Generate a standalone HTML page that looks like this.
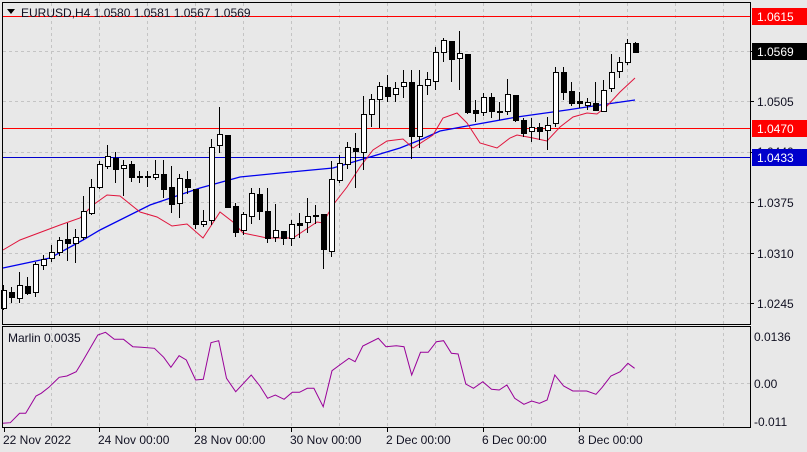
<!DOCTYPE html>
<html><head><meta charset="utf-8"><style>
html,body{margin:0;padding:0;background:#e8e8e8;width:807px;height:452px;overflow:hidden}
svg{display:block}
text{font-family:"Liberation Sans",sans-serif;font-size:12px;fill:#111122}
</style></head><body>
<svg id="s" width="807" height="452" xmlns="http://www.w3.org/2000/svg">
<rect width="807" height="452" fill="#e8e8e8"/>
<g id="grid" stroke="#c4c4c4" stroke-dasharray="3,3" stroke-width="1"></g>
<line x1="3" y1="16.5" x2="750" y2="16.5" stroke="#ff0000"/>
<line x1="3" y1="128.5" x2="750" y2="128.5" stroke="#ff0000"/>
<line x1="3" y1="157.5" x2="750" y2="157.5" stroke="#0000cc"/>
<polyline id="blue" fill="none" stroke="#0000ee" stroke-width="1.3"/>
<polyline id="red" fill="none" stroke="#e0143c" stroke-width="1"/>
<g id="candles"></g>
<polyline id="marlin" fill="none" stroke="#990099" stroke-width="1"/>
<rect x="2.5" y="2.5" width="748" height="322" fill="none" stroke="#000"/>
<rect x="2.5" y="326.5" width="748" height="101" fill="none" stroke="#000"/>
<polygon points="7,9 15,9 11,14" fill="#000"/>
<text x="21" y="17">EURUSD,H4  1.0580 1.0581 1.0567 1.0569</text>
<text x="8" y="342">Marlin 0.0035</text>
<g id="ticks" stroke="#000"></g>
<rect x="752" y="8" width="55" height="17" fill="#ff0000"/>
<text x="757" y="21" style="fill:#fff">1.0615</text>
<rect x="752" y="43" width="55" height="17" fill="#000"/>
<text x="757" y="56" style="fill:#fff">1.0569</text>
<text x="757" y="106">1.0505</text>
<rect x="752" y="120" width="55" height="17" fill="#ff0000"/>
<text x="757" y="133" style="fill:#fff">1.0470</text>
<text x="757" y="156">1.0440</text>
<rect x="752" y="149" width="55" height="17" fill="#0000cc"/>
<text x="757" y="162" style="fill:#fff">1.0433</text>
<text x="757" y="207">1.0375</text>
<text x="757" y="258">1.0310</text>
<text x="757" y="308">1.0245</text>
<text x="754" y="341">0.0136</text>
<text x="754" y="388">0.00</text>
<text x="754" y="426">-0.011</text>
<text x="3" y="444">22 Nov 2022</text>
<text x="98" y="444">24 Nov 00:00</text>
<text x="194" y="444">28 Nov 00:00</text>
<text x="290" y="444">30 Nov 00:00</text>
<text x="386" y="444">2 Dec 00:00</text>
<text x="482" y="444">6 Dec 00:00</text>
<text x="578" y="444">8 Dec 00:00</text>
</svg>
<script>
var NS="http://www.w3.org/2000/svg";
function el(p,t,a){var e=document.createElementNS(NS,t);for(var k in a)e.setAttribute(k,a[k]);p.appendChild(e);return e;}
var g=document.getElementById('grid');
[51,101,152,202,253,303].forEach(function(y){el(g,'line',{x1:3,x2:750,y1:y+.5,y2:y+.5});});
el(g,'line',{x1:3,x2:750,y1:383.5,y2:383.5});
for(var x=51;x<750;x+=48){el(g,'line',{x1:x+.5,x2:x+.5,y1:3,y2:324});el(g,'line',{x1:x+.5,x2:x+.5,y1:327,y2:427});}
var tk=document.getElementById('ticks');
[51,101,152,202,253,303].forEach(function(y){el(tk,'line',{x1:750,x2:754,y1:y+.5,y2:y+.5});});
[4,99,195,291,387,483,579].forEach(function(x){el(tk,'line',{x1:x+.5,x2:x+.5,y1:428,y2:432});});
var C=[[290,308,285,310,1],[292,297,287,303,0],[285,298,272,303,1],[286,293,277,295,0],[264,292,262,297,1],[259,265,255,270,1],[252,258,245,262,1],[240,252,237,256,1],[239,243,223,261,0],[237,243,229,263,1],[211,237,196,240,1],[187,213,179,215,1],[164,187,161,189,1],[156,166,145,169,1],[158,169,152,183,0],[165,168,160,196,1],[164,177,161,182,0],[176,177,171,183,0],[176,177,171,187,0],[174,177,160,180,1],[174,189,160,198,0],[187,204,166,213,0],[178,203,174,218,1],[179,187,171,194,0],[189,224,189,229,0],[221,224,210,227,1],[147,220,139,225,1],[134,145,107,153,1],[135,207,135,208,0],[206,232,203,237,0],[214,230,212,235,1],[193,216,188,224,1],[194,211,188,220,0],[211,238,188,243,0],[230,237,204,242,1],[231,238,231,245,0],[224,238,220,246,1],[223,225,213,238,0],[216,222,198,233,1],[215,216,205,224,0],[214,249,214,269,0],[179,251,161,257,1],[163,180,155,183,1],[147,164,142,169,1],[148,151,133,188,0],[114,152,96,170,1],[99,114,94,127,1],[86,99,82,128,1],[87,96,75,102,0],[88,94,82,102,1],[82,86,70,98,1],[82,136,70,159,0],[85,136,70,148,1],[79,85,72,95,1],[52,81,47,90,1],[40,52,38,62,1],[41,59,41,82,0],[53,58,31,90,1],[54,112,54,114,0],[110,113,100,122,0],[97,112,93,116,1],[97,111,93,118,0],[111,112,102,120,0],[94,111,79,115,1],[95,120,95,122,0],[120,133,118,137,0],[127,131,118,142,1],[127,131,123,140,0],[125,130,117,150,1],[72,123,67,127,1],[72,92,67,100,0],[91,103,82,106,0],[101,103,92,108,0],[102,105,98,110,1],[103,110,82,111,0],[90,111,80,112,1],[72,88,54,92,1],[62,71,57,78,1],[43,62,39,65,1],[43,52,42,53,0]];
var cg=document.getElementById('candles');
C.forEach(function(c,i){var x=3+8*i;
el(cg,'line',{x1:x+.5,x2:x+.5,y1:c[2],y2:c[3],stroke:'#000'});
var h=Math.max(c[1]-c[0],1);
el(cg,'rect',{x:x-2+.5,y:c[0]+.5,width:5,height:h,fill:c[4]?'#fff':'#000',stroke:'#000'});});
function pts(a){return a.map(function(p){return p[0]+','+p[1]}).join(' ');}
document.getElementById('blue').setAttribute('points',pts([[3,268],[50,258],[83,240],[100,230],[150,205],[200,188],[240,177],[280,173],[333,168],[370,157],[400,148],[420,140],[440,131],[467,126],[517,117],[567,110],[600,105],[635,100]]));
document.getElementById('red').setAttribute('points',pts([[3,250],[20,240],[60,225],[80,218],[93,205],[107,195],[120,196],[140,212],[157,217],[172,226],[187,224],[203,238],[220,212],[233,222],[243,233],[267,238],[293,238],[317,222],[323,223],[333,205],[347,187],[360,167],[373,150],[387,141],[403,139],[413,148],[433,135],[443,118],[457,113],[467,123],[480,143],[497,148],[510,138],[517,135],[533,138],[547,141],[560,127],[573,117],[587,113],[597,114],[607,106],[620,92],[635,78]]));
var M=[[5,370],[20,368],[38,340],[50,340],[70,288],[80,280],[95,262],[115,232],[130,228],[148,215],[160,185],[190,105],[205,97],[222,118],[240,118],[258,140],[275,142],[300,145],[318,172],[332,202],[348,167],[362,180],[380,240],[395,238],[410,128],[425,122],[440,235],[458,275],[488,225],[505,258],[520,295],[535,285],[552,298],[568,277],[582,277],[597,265],[610,265],[628,320],[645,212],[660,195],[678,175],[690,185],[705,138],[735,115],[750,140],[770,137],[785,140],[800,225],[817,157],[832,157],[848,125],[862,122],[877,160],[890,162],[905,252],[920,265],[938,245],[955,268],[970,270],[985,255],[1000,295],[1018,313],[1033,303],[1048,310],[1063,300],[1078,225],[1095,258],[1113,273],[1140,273],[1158,283],[1170,262],[1187,228],[1205,215],[1220,190],[1233,205]];
document.getElementById('marlin').setAttribute('points',pts(M.map(function(p){return [(p[0]/1.943).toFixed(1),(300+p[1]/3).toFixed(1)]})));
</script>
</body></html>
